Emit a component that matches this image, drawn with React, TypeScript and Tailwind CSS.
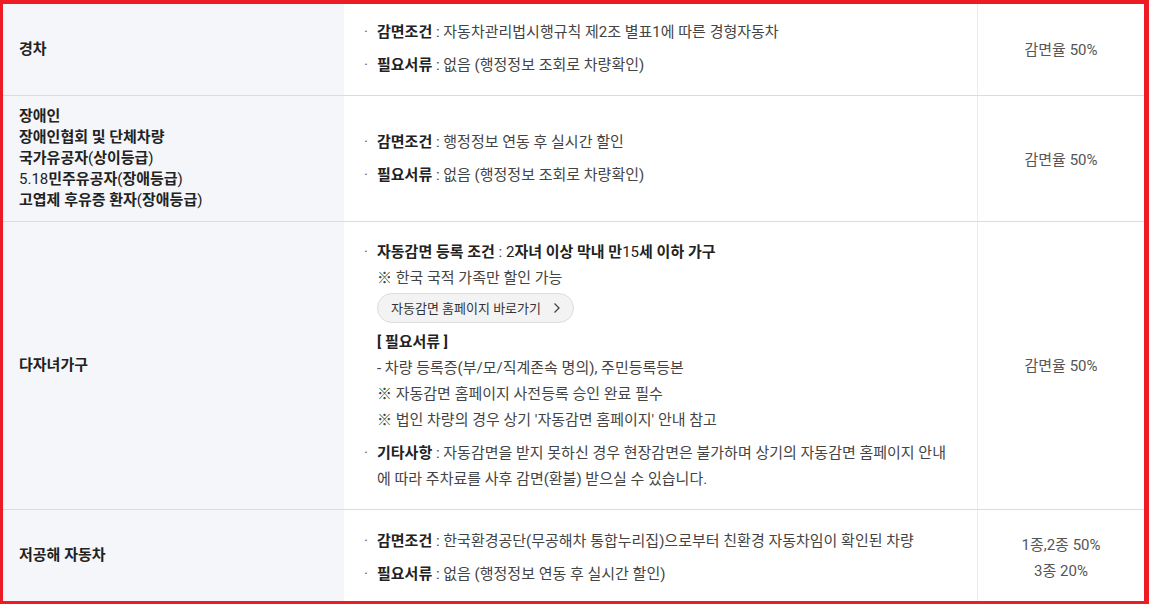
import React from "react";

function N({ children }: { children: React.ReactNode }) {
  return <span className="font-normal">{children}</span>;
}

function Item({ label, children }: { label: React.ReactNode; children: React.ReactNode }) {
  return (
    <div className="flex leading-[26px]">
      <span className="w-[13px] shrink-0 text-[#666]">·</span>
      <div className="min-w-0">
        <span className="font-bold text-[#222]">{label}</span>
        <span className="text-[#444]"> : </span>
        <span className="text-[#444]">{children}</span>
      </div>
    </div>
  );
}

function Col1({ children, className = "" }: { children: React.ReactNode; className?: string }) {
  return (
    <div
      className={
        "w-[341px] shrink-0 bg-[#f5f6fa] px-4 py-2.5 flex flex-col justify-center font-bold text-[#222] leading-[21px] " +
        className
      }
    >
      {children}
    </div>
  );
}

function Col2({ children, className = "" }: { children: React.ReactNode; className?: string }) {
  return (
    <div className={"flex-1 min-w-0 pl-5 pr-6 flex flex-col justify-center gap-[7px] " + className}>
      {children}
    </div>
  );
}

function Col3({ children, className = "" }: { children: React.ReactNode; className?: string }) {
  return (
    <div
      className={
        "w-[167px] shrink-0 border-l border-[#ececec] flex flex-col items-center justify-center text-[#555] leading-[26px] " +
        className
      }
    >
      {children}
    </div>
  );
}

export default function App() {
  return (
    <div className="w-[1149px] h-[604px] overflow-hidden bg-white border-solid border-[#ed1c24] border-t-4 border-l-[3px] border-r-[5px] border-b-[3px] text-[15px] font-['Roboto','Noto_Sans_CJK_KR',sans-serif] text-[#444]">
      {/* Row 1 */}
      <div className="flex h-[92px] border-b border-[#dcdcdc]">
        <Col1>경차</Col1>
        <Col2 className="pb-[2px]">
          <Item label="감면조건">자동차관리법시행규칙 제2조 별표1에 따른 경형자동차</Item>
          <Item label="필요서류">없음 (행정정보 조회로 차량확인)</Item>
        </Col2>
        <Col3>감면율 50%</Col3>
      </div>

      {/* Row 2 */}
      <div className="flex h-[126px] border-b border-[#dcdcdc]">
        <Col1>
          <div>장애인</div>
          <div>장애인협회 및 단체차량</div>
          <div>
            국가유공자<N>(</N>상이등급<N>)</N>
          </div>
          <div>
            <N>5.18</N>민주유공자<N>(</N>장애등급<N>)</N>
          </div>
          <div>
            고엽제 후유증 환자<N>(</N>장애등급<N>)</N>
          </div>
        </Col1>
        <Col2>
          <Item label="감면조건">행정정보 연동 후 실시간 할인</Item>
          <Item label="필요서류">없음 (행정정보 조회로 차량확인)</Item>
        </Col2>
        <Col3 className="pt-[2px]">감면율 50%</Col3>
      </div>

      {/* Row 3 */}
      <div className="flex h-[288px] border-b border-[#dcdcdc]">
        <Col1>다자녀가구</Col1>
        <Col2>
          <div className="flex leading-[26px]">
            <span className="w-[13px] shrink-0 text-[#666]">·</span>
            <div className="min-w-0 flex flex-col items-start">
              <div>
                <span className="font-bold text-[#222]">자동감면 등록 조건</span>
                <span> : </span>
                <span className="font-bold text-[#222]">
                  <N>2</N>자녀 이상 막내 만<N>15</N>세 이하 가구
                </span>
              </div>
              <div>※ 한국 국적 가족만 할인 가능</div>
              <button
                type="button"
                className="mt-[2px] h-[30px] inline-flex items-center gap-[12px] rounded-full border border-[#dcdcdc] bg-[#f3f3f3] pl-[13px] pr-[12px] text-[13px] text-[#333] leading-none"
              >
                <span>자동감면 홈페이지 바로가기</span>
                <svg width="8" height="12" viewBox="0 0 8 12" fill="none">
                  <path d="M1.5 1.5 L6 6 L1.5 10.5" stroke="#444" strokeWidth="1.3" />
                </svg>
              </button>
              <div className="mt-[6px] font-bold text-[#222]">[ 필요서류 ]</div>
              <div>- 차량 등록증(부/모/직계존속 명의), 주민등록등본</div>
              <div>※ 자동감면 홈페이지 사전등록 승인 완료 필수</div>
              <div>※ 법인 차량의 경우 상기 '자동감면 홈페이지' 안내 참고</div>
            </div>
          </div>
          <Item label="기타사항">
            자동감면을 받지 못하신 경우 현장감면은 불가하며 상기의 자동감면 홈페이지 안내
            <br />에 따라 주차료를 사후 감면(환불) 받으실 수 있습니다.
          </Item>
        </Col2>
        <Col3>감면율 50%</Col3>
      </div>

      {/* Row 4 */}
      <div className="flex h-[91px]">
        <Col1>저공해 자동차</Col1>
        <Col2 className="pt-[4px]">
          <Item label="감면조건">한국환경공단(무공해차 통합누리집)으로부터 친환경 자동차임이 확인된 차량</Item>
          <Item label="필요서류">없음 (행정정보 연동 후 실시간 할인)</Item>
        </Col2>
        <Col3 className="pt-[4px]">
          <div>1종,2종 50%</div>
          <div>3종 20%</div>
        </Col3>
      </div>
    </div>
  );
}
